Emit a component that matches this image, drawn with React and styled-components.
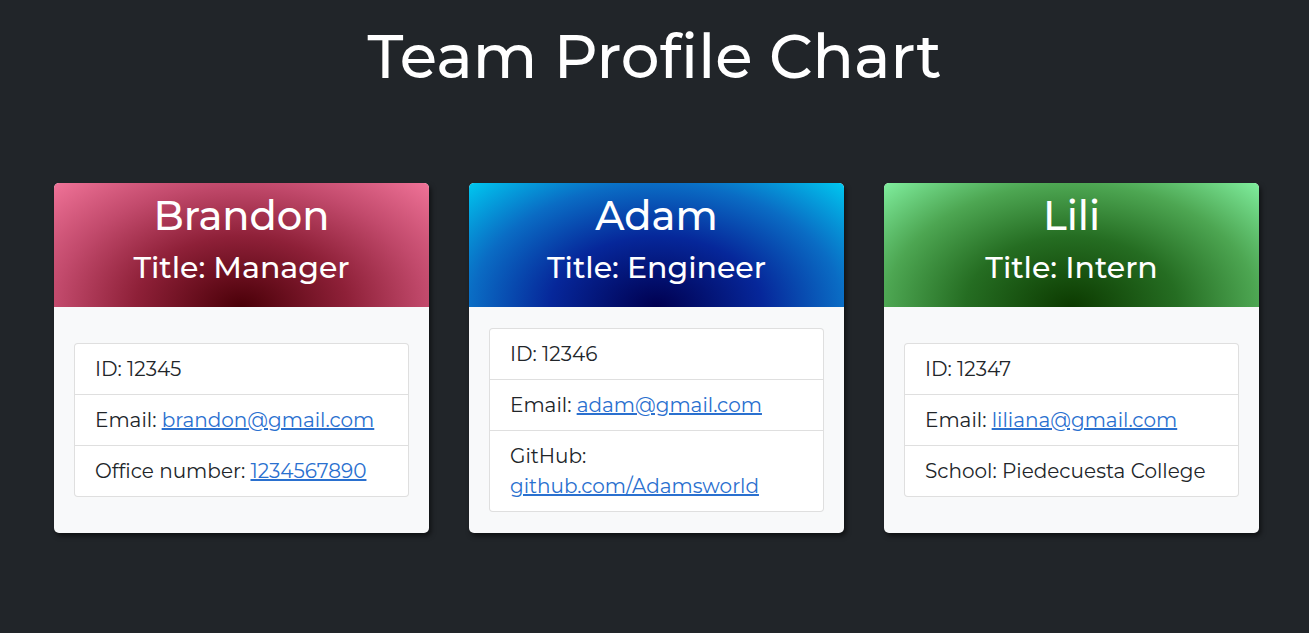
import React from 'react';
import styled, { createGlobalStyle } from 'styled-components';

const GlobalStyle = createGlobalStyle`
  * {
    box-sizing: border-box;
  }
  body {
    margin: 0;
    background: #212529;
    font-family: Montserrat, "Open Sans", "DejaVu Sans", sans-serif;
  }
`;

const Page = styled.div`
  min-height: 633px;
  background: #212529;
`;

const Banner = styled.header`
  padding: 20px 0 0;
  text-align: center;
`;

const PageTitle = styled.h1`
  margin: 0;
  color: #fff;
  font-size: 61px;
  font-weight: 500;
  line-height: 1.2;
`;

const CardRow = styled.main`
  display: flex;
  gap: 40px;
  padding: 90px 50px 0 54px;
`;

const Card = styled.section`
  width: 375px;
  display: flex;
  flex-direction: column;
  border-radius: 5px;
  overflow: hidden;
  background: #f8f9fa;
  box-shadow: 2px 3px 5px rgba(0, 0, 0, 0.55);
`;

const gradients = {
  Manager: 'radial-gradient(ellipse at 50% 100%, #4a0008 0%, #8e2038 40%, #c24a6c 70%, #f07398 100%)',
  Engineer: 'radial-gradient(ellipse at 50% 100%, #000050 0%, #06279a 40%, #0a6cc4 70%, #00c8f0 100%)',
  Intern: 'radial-gradient(ellipse at 50% 100%, #0c3a00 0%, #256d22 40%, #4da652 70%, #80ee9e 100%)',
};

const CardHeader = styled.div`
  height: 124px;
  padding-top: 9px;
  text-align: center;
  color: #fff;
  background: ${(p) => gradients[p.$role]};
`;

const Name = styled.h2`
  margin: 0 0 10px;
  font-size: 40px;
  font-weight: 500;
  line-height: 1.2;
`;

const Role = styled.h3`
  margin: 0;
  font-size: 30px;
  font-weight: 500;
  line-height: 1.2;
`;

const CardBody = styled.div`
  flex: 1;
  display: flex;
  align-items: center;
  padding: 21px 20px;
`;

const InfoList = styled.ul`
  width: 100%;
  margin: 0;
  padding: 0;
  list-style: none;
  background: #fff;
  border: 1px solid rgba(0, 0, 0, 0.125);
  border-radius: 4px;
`;

const InfoItem = styled.li`
  padding: 10px 20px;
  font-size: 20px;
  line-height: 30px;
  color: #212529;

  & + & {
    border-top: 1px solid rgba(0, 0, 0, 0.125);
  }
`;

const Link = styled.a`
  color: #2a70cf;
  text-decoration: underline;
`;

const team = [
  {
    name: 'Brandon',
    role: 'Manager',
    id: 12345,
    email: 'brandon@gmail.com',
    extra: { label: 'Office number', value: '1234567890', href: 'tel:1234567890' },
  },
  {
    name: 'Adam',
    role: 'Engineer',
    id: 12346,
    email: 'adam@gmail.com',
    extra: { label: 'GitHub', value: 'github.com/Adamsworld', href: 'https://github.com/Adamsworld' },
  },
  {
    name: 'Lili',
    role: 'Intern',
    id: 12347,
    email: 'liliana@gmail.com',
    extra: { label: 'School', value: 'Piedecuesta College' },
  },
];

const ProfileCard = ({ member }) => (
  <Card>
    <CardHeader $role={member.role}>
      <Name>{member.name}</Name>
      <Role>Title: {member.role}</Role>
    </CardHeader>
    <CardBody>
      <InfoList>
        <InfoItem>ID: {member.id}</InfoItem>
        <InfoItem>
          Email: <Link href={`mailto:${member.email}`}>{member.email}</Link>
        </InfoItem>
        <InfoItem>
          {member.extra.label}:{' '}
          {member.extra.href ? (
            <Link href={member.extra.href}>{member.extra.value}</Link>
          ) : (
            member.extra.value
          )}
        </InfoItem>
      </InfoList>
    </CardBody>
  </Card>
);

const App = () => (
  <Page>
    <GlobalStyle />
    <Banner>
      <PageTitle>Team Profile Chart</PageTitle>
    </Banner>
    <CardRow>
      {team.map((m) => (
        <ProfileCard key={m.id} member={m} />
      ))}
    </CardRow>
  </Page>
);

export default App;
